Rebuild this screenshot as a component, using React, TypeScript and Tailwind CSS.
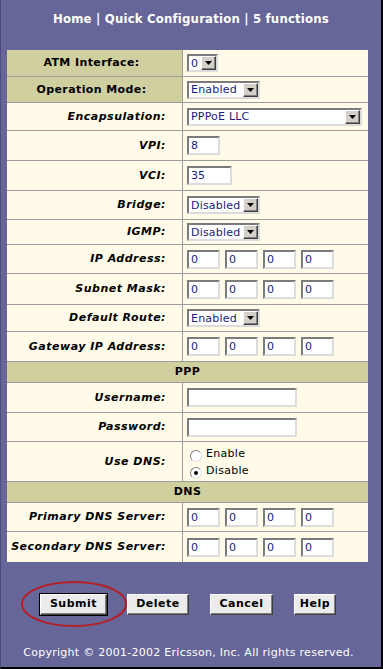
import React from "react";

const sunken =
  "border-2 border-t-[#7b7b7b] border-l-[#7b7b7b] border-r-[#dcdcdc] border-b-[#dcdcdc] bg-white";

function Arrow() {
  return (
    <span className="ml-auto flex h-[14px] w-[15px] shrink-0 items-center justify-center border border-t-white border-l-white border-r-[#404040] border-b-[#404040] bg-[#d4d0c8] shadow-[inset_-1px_-1px_0_#808080]">
      <svg width="7" height="4" viewBox="0 0 7 4">
        <path d="M0 0h7L3.5 4z" fill="#000" />
      </svg>
    </span>
  );
}

function Sel({ v, w }: { v: string; w: string }) {
  return (
    <div className={`flex h-[18px] items-center ${sunken} ${w}`}>
      <span className="pl-[2px] text-[11px] leading-none tracking-[0.2px] text-[#1a1a80]">{v}</span>
      <Arrow />
    </div>
  );
}

function Inp({ v, w }: { v: string; w: string }) {
  return (
    <div className={`flex h-[19px] items-center ${sunken} ${w}`}>
      <span className="pl-[2px] text-[11px] leading-none text-[#1a1a80]">{v}</span>
    </div>
  );
}

function IP() {
  return (
    <div className="flex gap-[5px]">
      <Inp v="0" w="w-[33px]" />
      <Inp v="0" w="w-[33px]" />
      <Inp v="0" w="w-[33px]" />
      <Inp v="0" w="w-[33px]" />
    </div>
  );
}

function Row({
  label,
  h,
  head,
  children,
  last,
}: {
  label: string;
  h: string;
  head?: boolean;
  children: React.ReactNode;
  last?: boolean;
}) {
  return (
    <div className={`flex ${h} ${last ? "" : "border-b border-[#9c9c9c]"}`}>
      <div
        className={
          head
            ? "flex w-[176px] shrink-0 items-center justify-center border-r border-[#9c9c9c] bg-[#cfcf9f] pr-[6px] pt-[1px] text-[11px] font-bold tracking-[0.4px] text-black"
            : "flex w-[176px] shrink-0 items-center justify-end border-r border-[#9c9c9c] pr-[16px] pt-[1px] text-[11px] font-bold italic tracking-[0.5px] text-black"
        }
      >
        {label}
      </div>
      <div className="flex flex-1 items-center pl-[4px]">{children}</div>
    </div>
  );
}

function Section({ t }: { t: string }) {
  return (
    <div className="flex h-[21px] items-center justify-center border-b border-[#9c9c9c] bg-[#cfcf9f] text-[11px] font-bold tracking-[0.4px] text-black">
      {t}
    </div>
  );
}

function Btn({ t, w, def }: { t: string; w: string; def?: boolean }) {
  return (
    <div
      className={`flex h-[21px] items-center justify-center border border-t-white border-l-white border-r-[#404040] border-b-[#404040] bg-[#ebebeb] text-[11px] font-bold tracking-[0.5px] text-black ${w} ${
        def ? "shadow-[inset_-1px_-1px_0_#808080,0_0_0_1px_#000]" : "shadow-[inset_-1px_-1px_0_#808080]"
      }`}
    >
      {t}
    </div>
  );
}

export default function App() {
  return (
    <div className="relative flex h-[669px] w-[383px] flex-col border-b-2 border-l border-r-2 border-b-black border-l-[#4c4c7c] border-r-black bg-[#666699] font-['DejaVu_Sans',Verdana,sans-serif]">
      <div className="flex h-[50px] items-start justify-center pt-[10px] font-['DejaVu_Sans_Condensed','DejaVu_Sans',sans-serif] text-[13px] font-bold leading-[17px] tracking-[0.2px] text-white">
        Home | Quick Configuration | 5 functions
      </div>
      <div className="ml-[6px] w-[361px] bg-[#fffbe8]">
        <Row label="ATM Interface:" h="h-[27px]" head>
          <Sel v="0" w="w-[31px]" />
        </Row>
        <Row label="Operation Mode:" h="h-[26px]" head>
          <Sel v="Enabled" w="w-[73px]" />
        </Row>
        <Row label="Encapsulation:" h="h-[28px]">
          <Sel v="PPPoE LLC" w="w-[175px]" />
        </Row>
        <Row label="VPI:" h="h-[30px]">
          <Inp v="8" w="w-[33px]" />
        </Row>
        <Row label="VCI:" h="h-[30px]">
          <Inp v="35" w="w-[45px]" />
        </Row>
        <Row label="Bridge:" h="h-[29px]">
          <Sel v="Disabled" w="w-[73px]" />
        </Row>
        <Row label="IGMP:" h="h-[25px]">
          <Sel v="Disabled" w="w-[73px]" />
        </Row>
        <Row label="IP Address:" h="h-[29px]">
          <IP />
        </Row>
        <Row label="Subnet Mask:" h="h-[31px]">
          <IP />
        </Row>
        <Row label="Default Route:" h="h-[27px]">
          <Sel v="Enabled" w="w-[73px]" />
        </Row>
        <Row label="Gateway IP Address:" h="h-[30px]">
          <IP />
        </Row>
        <Section t="PPP" />
        <Row label="Username:" h="h-[30px]">
          <Inp v="" w="w-[110px]" />
        </Row>
        <Row label="Password:" h="h-[29px]">
          <Inp v="" w="w-[110px]" />
        </Row>
        <Row label="Use DNS:" h="h-[40px]">
          <div className="mt-[2px] flex flex-col gap-[1px] pl-[3px] text-[11px] leading-[14px] tracking-[0.3px] text-black">
            <div className="flex items-center gap-[4px]">
              <span className="mt-[4px] h-[12px] w-[12px] rounded-full border border-t-[#808080] border-l-[#808080] border-r-[#e0e0e0] border-b-[#e0e0e0] bg-white" />
              <span>Enable</span>
            </div>
            <div className="flex items-center gap-[4px]">
              <span className="mt-[4px] flex h-[12px] w-[12px] items-center justify-center rounded-full border border-t-[#808080] border-l-[#808080] border-r-[#e0e0e0] border-b-[#e0e0e0] bg-white">
                <span className="h-[4px] w-[4px] rounded-full bg-black" />
              </span>
              <span>Disable</span>
            </div>
          </div>
        </Row>
        <Section t="DNS" />
        <Row label="Primary DNS Server:" h="h-[29px]">
          <IP />
        </Row>
        <Row label="Secondary DNS Server:" h="h-[30px]" last>
          <IP />
        </Row>
      </div>
      <div className="mt-[32px] flex pl-[39px]">
        <Btn t="Submit" w="w-[67px]" def />
        <div className="ml-[20px]">
          <Btn t="Delete" w="w-[62px]" />
        </div>
        <div className="ml-[21px]">
          <Btn t="Cancel" w="w-[63px]" />
        </div>
        <div className="ml-[21px]">
          <Btn t="Help" w="w-[42px]" />
        </div>
      </div>
      <div className="mt-[31px] pr-[5px] text-center text-[11px] leading-[13px] tracking-[0.27px] text-white">
        Copyright © 2001-2002 Ericsson, Inc. All rights reserved.
      </div>
      <svg className="pointer-events-none absolute left-[19px] top-[580px]" width="110" height="50" viewBox="0 0 110 50">
        <ellipse cx="54" cy="24" rx="52" ry="22" fill="none" stroke="#b51f24" strokeWidth="2" />
      </svg>
    </div>
  );
}
